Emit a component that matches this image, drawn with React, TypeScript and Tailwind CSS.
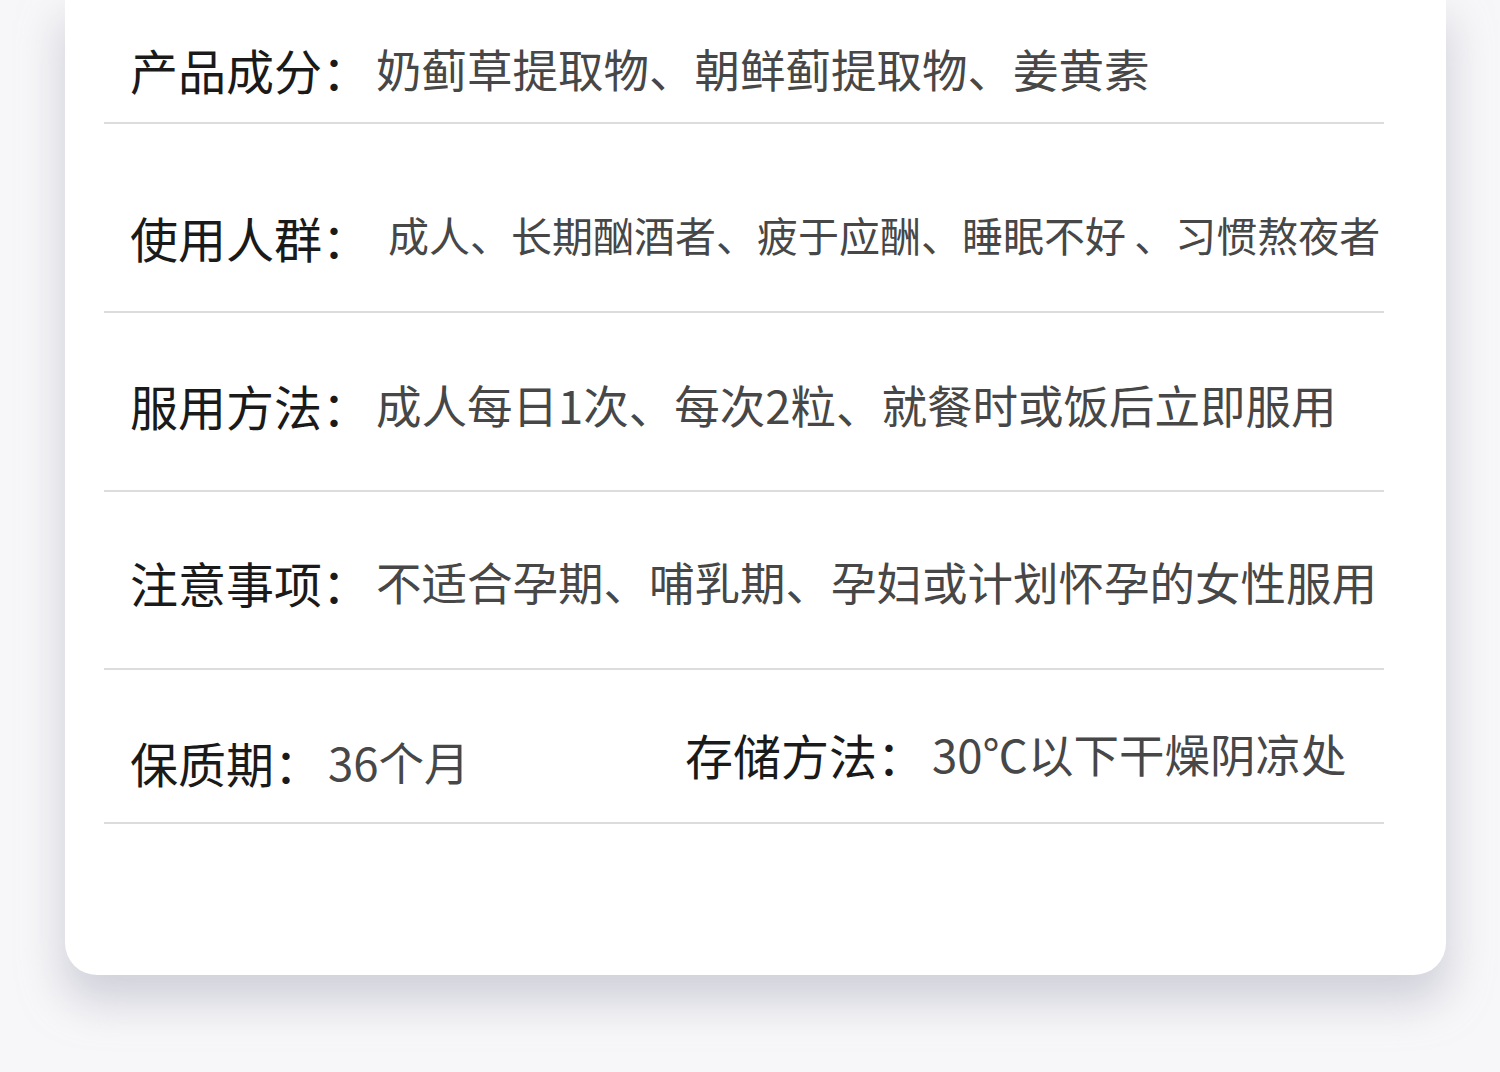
import React from 'react';

const font = { fontFamily: '"Noto Sans CJK SC", "Noto Sans", sans-serif' };

interface Row {
  label: string;
  value: string;
  h: string;
  pt: string;
  size: string;
}

const rows: Row[] = [
  { label: '产品成分：', value: '奶蓟草提取物、朝鲜蓟提取物、姜黄素', h: 'h-[124px]', pt: 'pt-[45px]', size: 'text-[45.5px]' },
  { label: '使用人群：', value: '成人、长期酗酒者、疲于应酬、睡眠不好\u2009、习惯熬夜者', h: 'h-[189px]', pt: 'pt-[89px]', size: 'text-[41px] pl-[12px]' },
  { label: '服用方法：', value: '成人每日1次、每次2粒、就餐时或饭后立即服用', h: 'h-[179px]', pt: 'pt-[68px]', size: 'text-[45.5px]' },
  { label: '注意事项：', value: '不适合孕期、哺乳期、孕妇或计划怀孕的女性服用', h: 'h-[178px]', pt: 'pt-[66px]', size: 'text-[45.5px]' },
];

export default function App() {
  return (
    <div className="min-h-[1072px] w-full bg-[#f7f7f9] overflow-hidden" style={font}>
      <div className="ml-[65px] w-[1381px] h-[975px] bg-white rounded-b-[32px] shadow-[0_24px_40px_4px_rgba(185,185,200,0.6)]">
        <div className="pl-[39px] pr-[62px]">
          {rows.map((r) => (
            <div key={r.label} className={`${r.h} ${r.pt} border-b-2 border-[#dcdcdc] pl-[26px] flex items-start leading-none whitespace-nowrap`}>
              <span className="text-[48px] text-[#1a1a1a] font-normal">{r.label}</span>
              <span className={`${r.size} text-[#474747] ml-[6px] mt-[1px]`}>{r.value}</span>
            </div>
          ))}
          <div className="h-[154px] pt-[65px] border-b-2 border-[#dcdcdc] pl-[26px] flex items-start leading-none whitespace-nowrap">
            <div className="w-[555px] flex items-start pt-[3px]">
              <span className="text-[48px] text-[#1a1a1a] font-normal">保质期：</span>
              <span className="text-[45.5px] text-[#474747] ml-[6px] mt-[1px]">36个月</span>
            </div>
            <div className="flex items-start -mt-[5px]">
              <span className="text-[48px] text-[#1a1a1a] font-normal">存储方法：</span>
              <span className="text-[45.5px] text-[#474747] ml-[7px] mt-[1px]">30℃以下干燥阴凉处</span>
            </div>
          </div>
        </div>
      </div>
    </div>
  );
}
